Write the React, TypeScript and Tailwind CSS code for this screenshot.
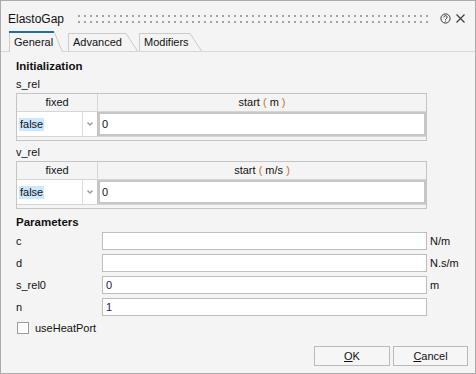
import React from 'react'

const Grip = () => (
  <svg width="352" height="8" className="ml-[14px]">
    <defs>
      <pattern id="dots" width="6" height="6" patternUnits="userSpaceOnUse">
        <rect x="0" y="0" width="2" height="2" fill="#a2a2a2" />
      </pattern>
    </defs>
    <rect width="352" height="8" fill="url(#dots)" />
  </svg>
)

const HelpIcon = () => (
  <svg width="11" height="11" viewBox="0 0 11 11" className="ml-[10px]">
    <circle cx="5.5" cy="5.5" r="4.6" fill="none" stroke="#3a3a3a" strokeWidth="1" />
    <path d="M3.9 4.3a1.6 1.6 0 1 1 2.3 1.4c-0.5 0.3-0.7 0.5-0.7 1.1" fill="none" stroke="#3a3a3a" strokeWidth="1" />
    <rect x="5" y="7.6" width="1" height="1" fill="#3a3a3a" />
  </svg>
)

const CloseIcon = () => (
  <svg width="9" height="9" viewBox="0 0 9 9" className="ml-[5px]">
    <path d="M0.5 0.5L8.5 8.5M8.5 0.5L0.5 8.5" stroke="#3a3a3a" strokeWidth="1.1" />
  </svg>
)

const Chevron = () => (
  <svg width="6" height="4" viewBox="0 0 6 4">
    <path d="M0.5 0.5L3 3L5.5 0.5" fill="none" stroke="#9a9a9a" strokeWidth="1.4" />
  </svg>
)

const Tab = ({ label, active, w, className }: { label: string; active?: boolean; w: number; className: string }) => {
  const h = active ? 21 : 18
  const s = active ? 9 : 12
  return (
    <div className={`relative flex items-center pl-[5px] ${className}`}>
      <svg width={w} height={h} className="absolute left-0 top-0">
        <polygon points={`0.5,${h} 0.5,0.5 ${w - s},0.5 ${w - 0.5},${h}`} fill="#f4f4f4" />
        <path d={`M0.5 ${h}V0.5H${w - s}L${w - 0.5} ${h}`} fill="none" stroke="#cbcbcb" strokeWidth="1" />
        {active && <rect x="0" y="0" width={w - s} height="2" fill="#1d6fa5" />}
      </svg>
      <span className="relative pt-[1px]">{label}</span>
    </div>
  )
}

const InitTable = ({ unit }: { unit: string }) => (
  <div className="mt-px flex h-[48px] w-[411px] flex-col border border-[#c4c4c4] bg-[#f4f4f4]">
    <div className="flex h-[18px] border-b border-[#d6d6d6]">
      <div className="flex w-[81px] items-center justify-center border-r border-[#d6d6d6]">fixed</div>
      <div className="flex flex-1 items-center justify-center whitespace-pre">
        {'start '}
        <span className="text-[#c7731e]">(</span>
        {' ' + unit + ' '}
        <span className="text-[#c7731e]">)</span>
      </div>
    </div>
    <div className="flex h-[24px]">
      <div className="flex w-[81px] border-r border-[#c4c4c4] bg-white">
        <div className="flex flex-1 items-center pl-[2px]">
          <span className="bg-[#cce8ff] px-[1px] leading-[13px]">false</span>
        </div>
        <div className="flex w-[15px] items-center justify-center border-l border-[#dcdcdc]">
          <Chevron />
        </div>
      </div>
      <div className="flex flex-1 items-center border-2 border-[#c6c6c6] bg-white pl-[2px]">0</div>
    </div>
    <div className="flex-1 border-t border-[#d6d6d6]" />
  </div>
)

const ParamRow = ({ label, value, unit, first }: { label: string; value?: string; unit?: string; first?: boolean }) => (
  <div className={`flex h-[18px] items-center ${first ? 'mt-[3px]' : 'mt-[4px]'}`}>
    <div className="w-[86px]">{label}</div>
    <div className="flex h-[18px] w-[325px] items-center border border-[#bdbdbd] bg-white px-[3px] text-[#1f1a3a]">
      {value}
    </div>
    <div className="ml-[3px]">{unit}</div>
  </div>
)

export default function App() {
  return (
    <div className="flex h-[374px] w-[476px] flex-col border border-[#ababab] bg-[#f4f4f4] font-['Liberation_Sans',Arial,sans-serif] text-[11px] text-[#111]">
      {/* title bar */}
      <div className="flex h-[30px] items-center pl-[7px] pt-[5px]">
        <span className="text-[12px]">ElastoGap</span>
        <Grip />
        <HelpIcon />
        <CloseIcon />
      </div>

      {/* tabs */}
      <div className="flex h-[21px] items-end border-b border-[#d7d7d7] pl-[8px]">
        <Tab label="General" active w={54} className="z-10 -mb-px h-[21px] w-[54px]" />
        <Tab label="Advanced" w={70} className="ml-[5px] h-[18px] w-[70px]" />
        <Tab label="Modifiers" w={63} className="ml-[1px] h-[18px] w-[63px]" />
      </div>

      {/* page */}
      <div className="flex flex-1 flex-col pl-[15px] pr-[7px]">
        <div className="mt-[7px] h-[14px] text-[11.5px] font-bold leading-[14px]">Initialization</div>
        <div className="mt-[3px] h-[16px] leading-[16px]">s_rel</div>
        <InitTable unit="m" />
        <div className="mt-[3px] h-[16px] leading-[16px]">v_rel</div>
        <InitTable unit="m/s" />
        <div className="mt-[6px] h-[14px] text-[11.5px] font-bold leading-[14px]">Parameters</div>
        <ParamRow label="c" unit="N/m" first />
        <ParamRow label="d" unit="N.s/m" />
        <ParamRow label="s_rel0" value="0" unit="m" />
        <ParamRow label="n" value="1" />
        <div className="mt-[5px] flex h-[14px] items-center">
          <div className="ml-px h-[12px] w-[12px] border border-[#9c9c9c] bg-white" />
          <span className="ml-[6px]">useHeatPort</span>
        </div>
        <div className="mt-[11px] flex justify-end gap-[3px]">
          <button className="flex h-[20px] w-[76px] items-center justify-center border border-[#b9b9b9] bg-[#f6f6f6]">
            <span className="underline underline-offset-1">O</span>K
          </button>
          <button className="flex h-[20px] w-[75px] items-center justify-center border border-[#b9b9b9] bg-[#f6f6f6]">
            <span className="underline underline-offset-1">C</span>ancel
          </button>
        </div>
      </div>
    </div>
  )
}
